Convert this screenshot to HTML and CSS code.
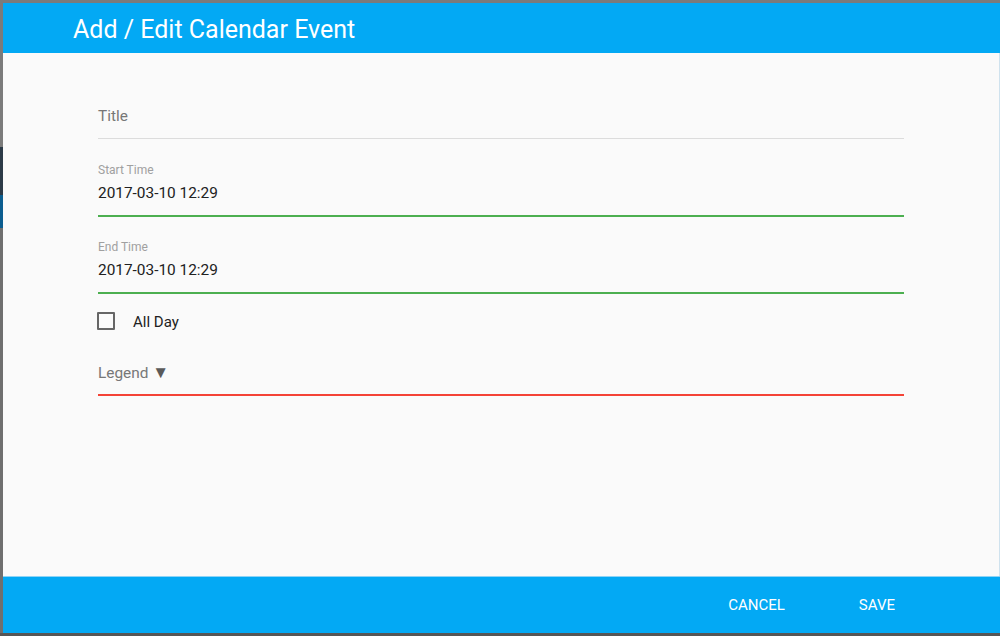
FILE: index.html
```html
<!DOCTYPE html>
<html>
<head>
<meta charset="utf-8">
<link rel="stylesheet" href="styles.css">
</head>
<body>
<div class="top-gap"></div>
<div class="stage">
  <div class="backdrop-strip">
    <div class="bs grey1"></div>
    <div class="bs dark"></div>
    <div class="bs blue"></div>
    <div class="bs grey2"></div>
  </div>
  <div class="dialog">
    <div class="dialog-header">Add / Edit Calendar Event</div>
    <div class="dialog-body">
      <div class="field field-first">
        <div class="field-label"></div>
        <div class="field-value placeholder">Title</div>
      </div>
      <div class="field field-valid">
        <div class="field-label">Start Time</div>
        <div class="field-value">2017-03-10 12:29</div>
      </div>
      <div class="field field-valid">
        <div class="field-label">End Time</div>
        <div class="field-value">2017-03-10 12:29</div>
      </div>
      <label class="check-row">
        <span class="checkbox"></span>
        <span class="check-text">All Day</span>
      </label>
      <div class="field field-select">
        <div class="field-value placeholder">Legend <span class="caret">▼</span></div>
      </div>
    </div>
    <div class="dialog-footer">
      <button class="btn">CANCEL</button>
      <button class="btn">SAVE</button>
    </div>
  </div>
</div>
<div class="bottom-gap"></div>
</body>
</html>
```
FILE: styles.css
```css
html, body {
  margin: 0;
  padding: 0;
}
body {
  width: 1000px;
  height: 636px;
  overflow: hidden;
  background: #7b7b7b;
  font-family: Roboto, "Liberation Sans", sans-serif;
  display: flex;
  flex-direction: column;
}
.top-gap {
  height: 3px;
  flex: none;
}
.stage {
  height: 630px;
  display: flex;
  flex: none;
}
.bottom-gap {
  height: 3px;
  background: #565656;
  flex: none;
}
.backdrop-strip {
  width: 3px;
  flex: none;
  display: flex;
  flex-direction: column;
}
.bs { width: 3px; }
.grey1 { height: 144px; background: #7b7b7b; }
.dark { height: 48px; background: #2c3a47; }
.blue { height: 33px; background: #0b5d8f; }
.grey2 { flex: 1; background: #6f6f6f; }

.dialog {
  width: 997px;
  flex: none;
  display: flex;
  flex-direction: column;
  background: #fafafa;
}
.dialog-header {
  height: 50px;
  flex: none;
  background: #03a9f4;
  color: #ffffff;
  font-size: 25px;
  line-height: 54px;
  padding-left: 70px;
  box-sizing: border-box;
}
.dialog-body {
  flex: 1;
  padding: 33px 95px 0 95px;
  border-right: 1px solid #cfe2ee;
}
.field {
  border-bottom: 1px solid #dcdcdc;
  padding-bottom: 12px;
  margin-bottom: 24px;
}
.field-valid {
  border-bottom: 2px solid #4caf50;
  margin-bottom: 23px;
}
.field-valid + .field-valid {
  margin-bottom: 18px;
}
.field-label {
  font-size: 12px;
  line-height: 14px;
  height: 14px;
  color: #a0a0a0;
  margin-bottom: 6px;
}
.field-value {
  font-size: 15.4px;
  line-height: 20px;
  height: 20px;
  color: #212121;
}
.placeholder {
  color: #777777;
}
.caret {
  color: #5a5a5a;
  font-size: 17px;
  line-height: 20px;
}
.check-row {
  display: flex;
  align-items: center;
  height: 18px;
  margin-left: -1px;
  margin-bottom: 33px;
}
.checkbox {
  width: 18px;
  height: 18px;
  box-sizing: border-box;
  border: 2px solid #666666;
  border-radius: 1px;
  flex: none;
}
.check-text {
  margin-left: 18px;
  font-size: 15px;
  color: #212121;
  line-height: 20px;
  margin-top: 2px;
}
.field.field-select {
  border-bottom: 2px solid #f44336;
  padding-bottom: 11px;
  margin-bottom: 0;
}
.field-select .field-value {
  margin-top: -1px;
  height: 21px;
}
.dialog-footer {
  height: 57px;
  flex: none;
  background: #03a9f4;
  border-top: 1px solid #8fd3f5;
  box-sizing: border-box;
  display: flex;
  justify-content: flex-end;
  align-items: center;
  padding-right: 69px;
  gap: 2px;
}
.btn {
  background: transparent;
  border: none;
  color: #ffffff;
  font-family: Roboto, "Liberation Sans", sans-serif;
  font-size: 15px;
  padding: 0 36px;
  height: 36px;
  cursor: pointer;
}
```
